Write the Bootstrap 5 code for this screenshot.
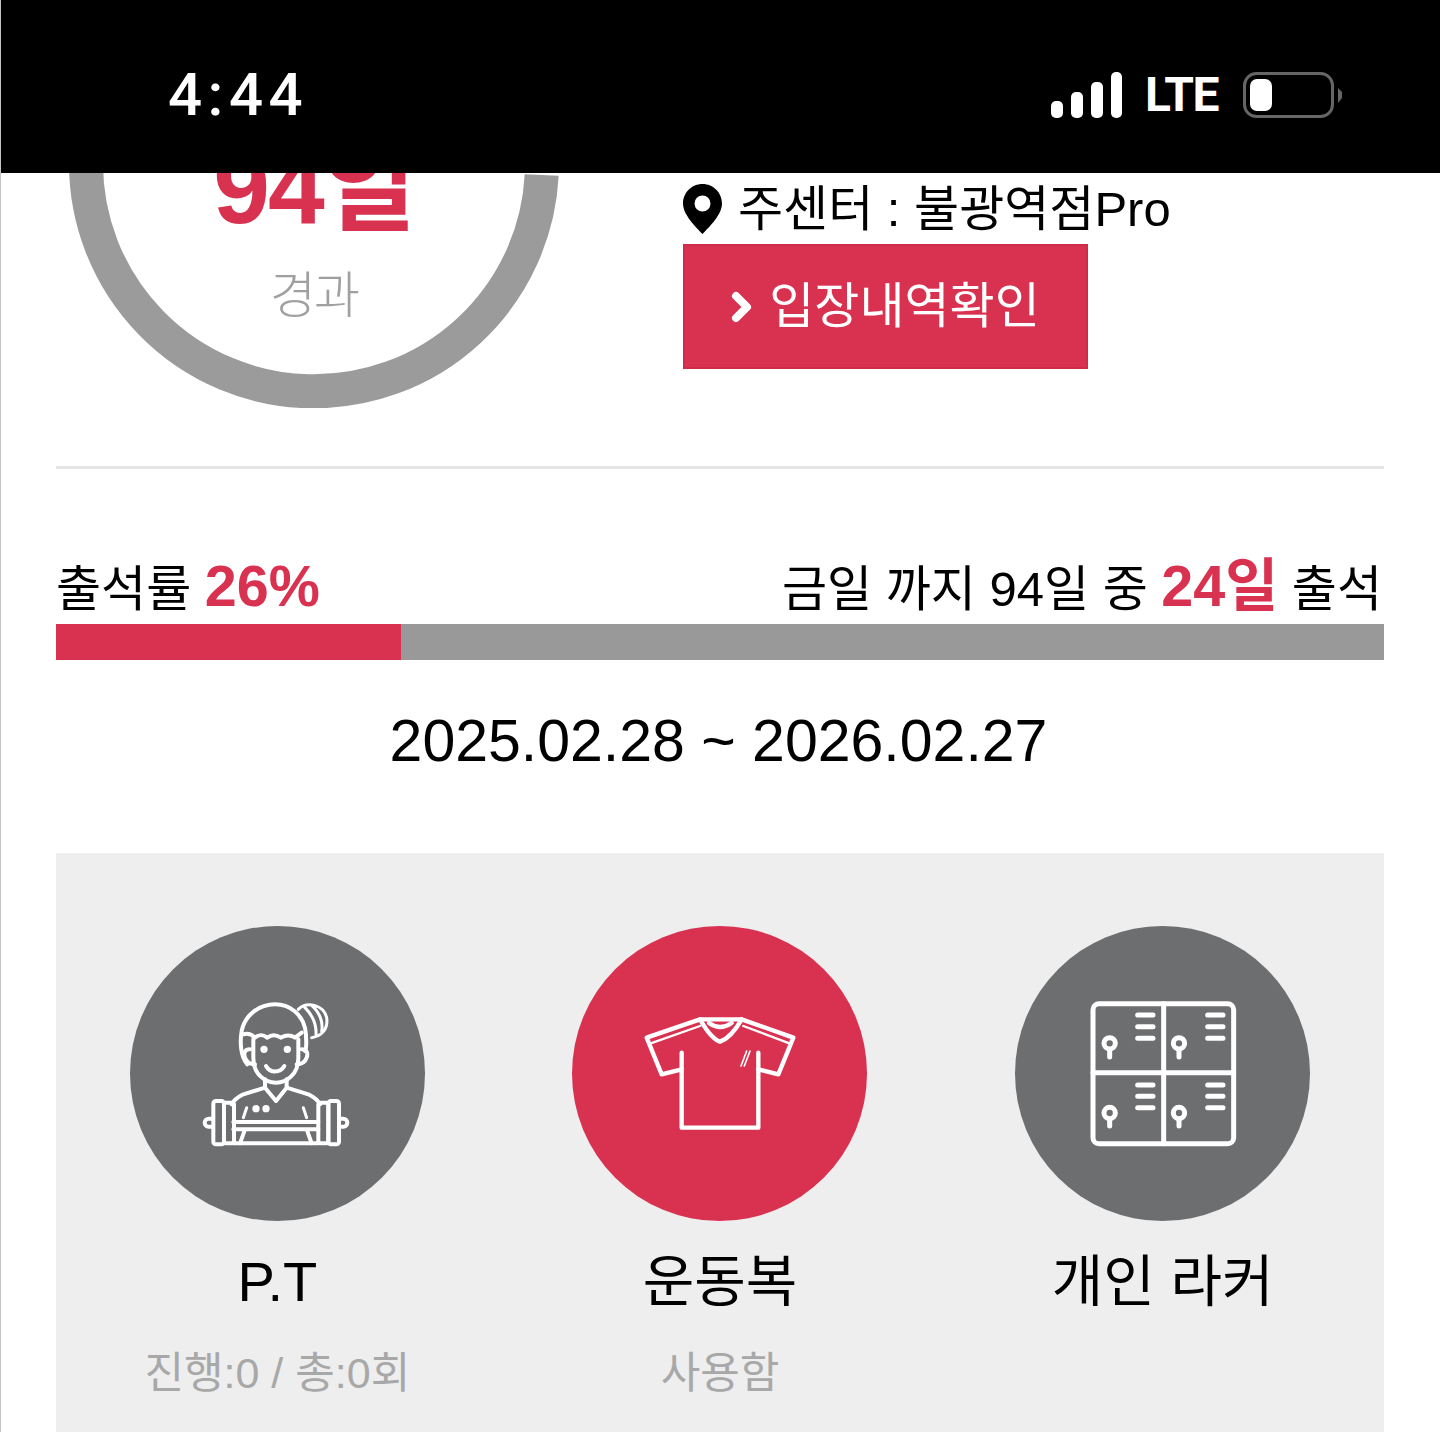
<!DOCTYPE html>
<html lang="ko">

<head>
    <meta charset="UTF-8" />
    <meta name="viewport" content="width=device-width, initial-scale=1.0" />
    <title>출석 현황</title>
    <link href="https://cdn.jsdelivr.net/npm/bootstrap@5.3.0/dist/css/bootstrap.min.css" rel="stylesheet" />
    <style>
        body {
            background-color: #ffffff;
            color: #000000;
            font-family: "Liberation Sans", "Noto Sans CJK KR", sans-serif;
            font-weight: 400;
            border-left: 1px solid #c4c4c4;
        }

        .app-frame {
            height: 1432px;
            overflow: hidden;
        }

        .status-bar {
            position: relative;
            z-index: 2;
            height: 173px;
            padding: 17px 97px 0 167px;
            background-color: #000000;
            color: #ffffff;
        }

        .status-time {
            font-family: Roboto, sans-serif;
            font-size: 60px;
            font-weight: 500;
            letter-spacing: 5.5px;
            line-height: 1;
        }

        .status-lte {
            margin: 0 25px 0 22px;
            font-family: "Liberation Sans Narrow", Roboto, sans-serif;
            font-size: 48px;
            font-weight: 700;
            line-height: 1;
            letter-spacing: -1.5px;
        }

        .page-body {
            padding: 0 56px 0 55px;
        }

        .hero {
            height: 293px;
        }

        .ring-box {
            position: relative;
            flex: 0 0 490px;
            height: 490px;
            margin: -255px 0 0 13px;
            padding-top: 219px;
            text-align: center;
        }

        .ring-art {
            position: absolute;
            top: 0;
            left: 0;
        }

        .ring-value {
            position: relative;
            font-size: 102px;
            font-weight: 700;
            line-height: 1;
            letter-spacing: -2px;
            color: #d93250;
        }

        .ring-label {
            position: relative;
            margin-top: 32px;
            font-size: 50px;
            font-weight: 300;
            line-height: 1;
            letter-spacing: -2px;
            color: #a0a0a0;
        }

        .hero-info {
            margin-left: 124px;
        }

        .center-name {
            height: 71px;
            font-size: 49px;
            line-height: 50px;
        }

        .btn-entry {
            width: 405px;
            height: 125px;
            border: 2px solid #cf2c49;
            border-radius: 0;
            background-color: #d93250;
            color: #ffffff;
            font-size: 49px;
            font-weight: 400;
        }

        .divider {
            height: 3px;
            background-color: #e6e6e6;
        }

        .attend-row {
            height: 155px;
            margin-right: 2px;
            padding-bottom: 9px;
            font-size: 49px;
            line-height: 1;
        }

        .attend-strong {
            font-size: 57.5px;
            font-weight: 700;
            color: #d93250;
        }

        .attend-bar {
            height: 36px;
            border-radius: 0;
            background-color: #999999;
        }

        .attend-bar .progress-bar {
            background-color: #d93250;
        }

        .date-range {
            height: 193px;
            padding: 52px 3px 0 0;
            font-size: 59px;
            line-height: 1;
        }

        .service-panel {
            height: 600px;
            padding-top: 73px;
            background-color: #eeeeee;
        }

        .service-circle {
            width: 295px;
            height: 295px;
            border-radius: 50%;
            background-color: #6d6e70;
        }

        .service-circle.is-active {
            background-color: #d93250;
        }

        .service-circle svg {
            fill: none;
            stroke: #ffffff;
            stroke-linecap: round;
            stroke-linejoin: round;
        }

        .service-name {
            margin-top: 29px;
            font-size: 56px;
            line-height: 64px;
        }

        .service-sub {
            margin-top: 34px;
            font-size: 43px;
            line-height: 50px;
            color: #a8a8a8;
        }
    </style>
</head>

<body>
    <div class="app-frame">
        <!-- status bar -->
        <div class="status-bar d-flex justify-content-between align-items-center">
            <span class="status-time">4:44</span>
            <div class="d-flex align-items-center">
                <svg width="72" height="46" viewBox="0 0 72 46" fill="#ffffff">
                    <rect x="0" y="29" width="12" height="17" rx="5" />
                    <rect x="20" y="20" width="12" height="26" rx="5" />
                    <rect x="40" y="10" width="12" height="36" rx="5" />
                    <rect x="60" y="0" width="11" height="46" rx="5" />
                </svg>
                <span class="status-lte">LTE</span>
                <svg width="100" height="46" viewBox="0 0 100 46">
                    <rect x="1.5" y="1.5" width="88" height="43" rx="12" fill="none" stroke="#666666" stroke-width="3" />
                    <rect x="7" y="7" width="22" height="32" rx="7" fill="#ffffff" />
                    <path d="M95 16 L99 20 L99 26 L95 31 Z" fill="#666666" />
                </svg>
            </div>
        </div>

        <main class="page-body">
            <!-- ring and center info -->
            <section class="hero d-flex">
                <div class="ring-box">
                    <svg class="ring-art" width="490" height="490" viewBox="0 0 490 490">
                        <path d="M472.7 257 A228 228 0 0 1 17 245 A228 228 0 0 1 245 17" fill="none" stroke="#9b9b9b" stroke-width="34" />
                    </svg>
                    <div class="ring-value">94일</div>
                    <div class="ring-label">경과</div>
                </div>
                <div class="hero-info">
                    <div class="center-name d-flex align-items-center">
                        <svg class="me-3" width="39" height="50" viewBox="0 0 39 50">
                            <path fill-rule="evenodd" d="M19.5 0C8.7 0 0 8.7 0 19.5C0 31 13 43 19.5 50C26 43 39 31 39 19.5C39 8.7 30.3 0 19.5 0ZM19.5 11.5a8 8 0 1 1 0 16a8 8 0 0 1 0-16Z" />
                        </svg>
                        <span>주센터 : 불광역점Pro</span>
                    </div>
                    <button type="button" class="btn btn-entry d-flex align-items-center justify-content-center">
                        <svg class="me-3" width="22" height="32" viewBox="0 0 22 32">
                            <path d="M5 5 L16 16 L5 27" fill="none" stroke="#ffffff" stroke-width="8" stroke-linecap="round" stroke-linejoin="round" />
                        </svg>
                        입장내역확인
                    </button>
                </div>
            </section>

            <div class="divider"></div>

            <!-- attendance -->
            <div class="attend-row d-flex justify-content-between align-items-end">
                <span>출석률 <span class="attend-strong">26%</span></span>
                <span>금일 까지 94일 중 <span class="attend-strong">24일</span> 출석</span>
            </div>
            <div class="progress attend-bar">
                <div class="progress-bar" role="progressbar" style="width: 26%" aria-valuenow="26" aria-valuemin="0" aria-valuemax="100"></div>
            </div>
            <div class="date-range text-center">2025.02.28 ~ 2026.02.27</div>

            <!-- services -->
            <section class="service-panel row g-0 text-center">
                <div class="col-4">
                    <div class="service-circle d-flex align-items-center justify-content-center mx-auto">
                        <svg width="174" height="176" viewBox="0 0 522 528" stroke-width="12">
                            <path d="M172 235C150 210 150 165 155 135C165 85 210 55 255 55C300 55 335 85 345 125C350 150 350 190 345 195" />
                            <path d="M160 145C175 140 185 145 195 155C205 145 220 145 232 155C245 145 258 145 272 155C285 148 300 145 315 155L335 140" />
                            <path d="M325 70C350 45 400 55 410 95C415 130 395 150 365 155M345 65C370 90 380 120 378 148M365 58C390 80 400 110 395 135" stroke-width="9" />
                            <path d="M190 160V215C190 265 225 290 258 290C290 290 325 265 325 215V160" />
                            <path d="M180 190C165 190 160 200 165 215C170 230 180 235 195 235M335 190C350 190 355 200 350 215C345 230 335 235 320 235" />
                            <circle cx="222" cy="190" r="5" fill="#ffffff" />
                            <circle cx="292" cy="190" r="5" fill="#ffffff" />
                            <path d="M228 240C240 262 270 262 283 240" />
                            <path d="M225 280V305L258 345L290 305V280" />
                            <path d="M225 305L160 325C140 335 130 345 125 355M290 305L355 325C375 335 385 345 390 355" />
                            <path d="M170 365L160 395M340 365L350 395" stroke-width="9" />
                            <circle cx="198" cy="368" r="5" fill="#ffffff" />
                            <circle cx="228" cy="368" r="5" fill="#ffffff" />
                            <path d="M130 408H385M130 430H385M165 430L150 472M350 430L365 472M130 472H385" />
                            <rect x="70" y="345" width="32" height="130" rx="8" />
                            <rect x="102" y="350" width="30" height="122" rx="6" />
                            <rect x="385" y="350" width="30" height="122" rx="6" />
                            <rect x="415" y="345" width="32" height="130" rx="8" />
                            <path d="M68 398H56A12 12 0 0 0 56 422H68M448 398H460A12 12 0 0 1 460 422H448" />
                        </svg>
                    </div>
                    <div class="service-name">P.T</div>
                    <div class="service-sub">진행:0 / 총:0회</div>
                </div>
                <div class="col-4">
                    <div class="service-circle is-active d-flex align-items-center justify-content-center mx-auto">
                        <svg width="170" height="146" viewBox="0 0 510 438" stroke-width="13">
                            <path d="M140 155V380H370V155" />
                            <path d="M140 205L80 220L35 110L195 55H320L475 110L430 220L370 205" />
                            <path d="M195 55C215 90 235 115 255 122C275 115 300 90 320 55M222 66Q255 90 290 66" />
                            <path d="M45 128L195 75M465 128L325 75" stroke-width="7" />
                            <path d="M318 195L335 150M328 195L345 150" stroke-width="5" />
                        </svg>
                    </div>
                    <div class="service-name">운동복</div>
                    <div class="service-sub">사용함</div>
                </div>
                <div class="col-4">
                    <div class="service-circle d-flex align-items-center justify-content-center mx-auto">
                        <svg width="164" height="166" viewBox="4 0 492 498" stroke-width="15">
                            <rect x="40" y="38" width="422" height="420" rx="18" />
                            <path d="M252 38V458M40 245H462" />
                            <path d="M174 72H220M174 107H220M174 142H220M384 72H430M384 107H430M384 142H430M174 282H220M174 316H220M174 350H220M384 282H430M384 316H430M384 350H430" />
                            <circle cx="90" cy="157" r="17" />
                            <path d="M90 176V198" />
                            <circle cx="298" cy="157" r="17" />
                            <path d="M298 176V198" />
                            <circle cx="90" cy="366" r="17" />
                            <path d="M90 385V405" />
                            <circle cx="298" cy="366" r="17" />
                            <path d="M298 385V405" />
                        </svg>
                    </div>
                    <div class="service-name">개인 라커</div>
                </div>
            </section>
        </main>
    </div>

    <script src="https://cdn.jsdelivr.net/npm/bootstrap@5.3.0/dist/js/bootstrap.bundle.min.js"></script>
</body>

</html>
